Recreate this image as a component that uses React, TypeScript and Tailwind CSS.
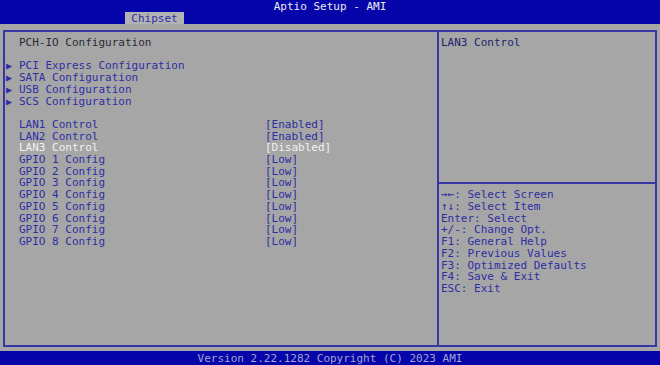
import React from 'react';

const MONO = "font-['DejaVu_Sans_Mono',monospace]";

const subMenus = ['PCI Express Configuration', 'SATA Configuration', 'USB Configuration', 'SCS Configuration'];

const settings = [
  { label: 'LAN1 Control', value: '[Enabled]' },
  { label: 'LAN2 Control', value: '[Enabled]' },
  { label: 'LAN3 Control', value: '[Disabled]', active: true },
  { label: 'GPIO 1 Config', value: '[Low]' },
  { label: 'GPIO 2 Config', value: '[Low]' },
  { label: 'GPIO 3 Config', value: '[Low]' },
  { label: 'GPIO 4 Config', value: '[Low]' },
  { label: 'GPIO 5 Config', value: '[Low]' },
  { label: 'GPIO 6 Config', value: '[Low]' },
  { label: 'GPIO 7 Config', value: '[Low]' },
  { label: 'GPIO 8 Config', value: '[Low]' },
];

const keys = [
  '→←: Select Screen',
  '↑↓: Select Item',
  'Enter: Select',
  '+/-: Change Opt.',
  'F1: General Help',
  'F2: Previous Values',
  'F3: Optimized Defaults',
  'F4: Save & Exit',
  'ESC: Exit',
];

export default function App() {
  return (
    <div className={`w-[660px] h-[365px] flex flex-col bg-[#a6a6a6] text-[11px] leading-[11.7px] ${MONO} whitespace-pre`}>
      {/* Top bar with tab */}
      <header className="h-[24px] bg-[#0505aa] flex flex-col">
        <div className="h-[12px] leading-[13px] text-center text-[#ececec]">Aptio Setup - AMI</div>
        <div className="h-[12px] ml-[125px] w-[59px] bg-[#b2b2b2] text-[#2e2ea4] leading-[13px] text-center">Chipset</div>
      </header>

      {/* Main frame */}
      <div className="mt-[6px] ml-[3px] w-[654px] h-[317px] border-2 border-[#3636a6] flex">
        <div className="w-[432px] pt-[5px]">
          <div className="pl-[14px] text-[#2a2a3a]">PCH-IO Configuration</div>
          <div className="h-[11.7px]" />
          {subMenus.map((s) => (
            <div key={s} className="flex text-[#2e2ea4]">
              <span className="w-[14px] pl-[1px] text-[10px]">▶</span>
              <span>{s}</span>
            </div>
          ))}
          <div className="h-[11.7px]" />
          {settings.map((r) => (
            <div key={r.label} className={`flex pl-[14px] ${r.active ? 'text-[#f2f2f2]' : 'text-[#2e2ea4]'}`}>
              <span className="w-[246px]">{r.label}</span>
              <span>{r.value}</span>
            </div>
          ))}
        </div>

        <div className="flex-1 border-l-2 border-[#3636a6] flex flex-col">
          <div className="h-[150px] pt-[5px] pl-[2px] text-[#22226e]">LAN3 Control</div>
          <div className="border-t-2 border-[#3636a6] pt-[5px] pl-[2px] text-[#2e2ea4]">
            {keys.map((k) => (
              <div key={k} className="leading-[11.75px]">{k}</div>
            ))}
          </div>
        </div>
      </div>

      {/* Footer */}
      <footer className="mt-[4px] h-[14px] bg-[#0505aa] text-center text-[#a4a4d0] leading-[15px]">
        Version 2.22.1282 Copyright (C) 2023 AMI
      </footer>
    </div>
  );
}
